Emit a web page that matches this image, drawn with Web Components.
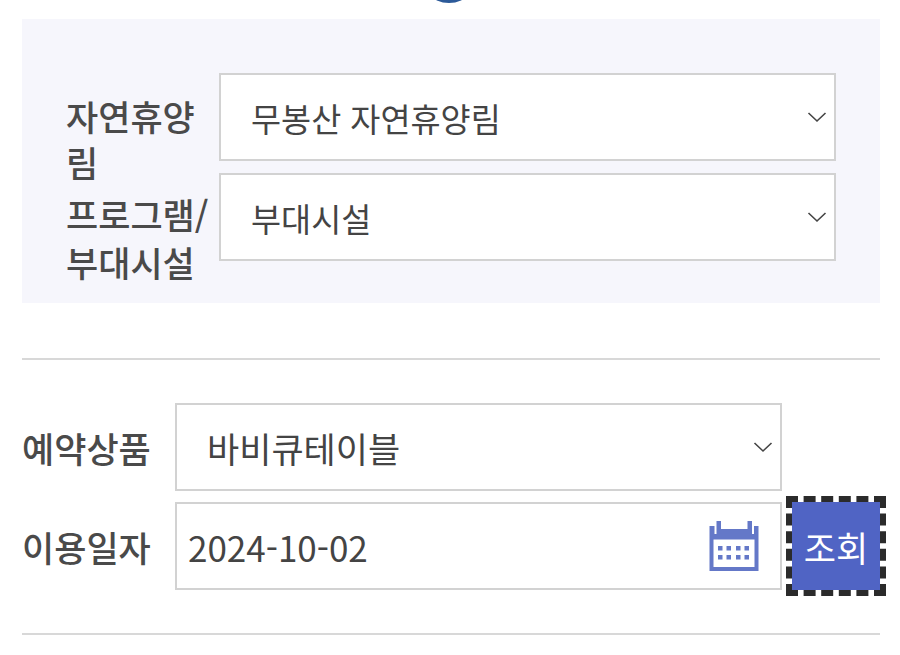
<!DOCTYPE html>
<html lang="ko"><head><meta charset="utf-8">
<style>
html,body{margin:0;padding:0;background:#fff;height:655px;overflow:hidden}
body{font-family:"Noto Sans CJK KR","Noto Sans",sans-serif;color:#444;position:relative}
</style></head><body>
<page-view></page-view>
<script>
const chevron=`<svg width="20" height="12" viewBox="0 0 20 12" fill="none"><path d="M1.5 2 L10 10 L18.5 2" stroke="#444" stroke-width="1.6"/></svg>`;
class PickBox extends HTMLElement{
  constructor(){super();this.attachShadow({mode:'open'}).innerHTML=`<style>
  :host{display:flex;align-items:center;box-sizing:border-box;height:88px;background:#fff;border:2px solid #d2d2d2;font-size:var(--fs,35px);color:#444;padding-left:var(--pl,30px);padding-right:7px;flex:1;min-width:0}
  .t{flex:1;white-space:nowrap;line-height:47px}
  .i{display:flex}
  </style><span class="t"><slot></slot></span><span class="i"><slot name="icon">${chevron}</slot></span>`;}
}
class FieldLabel extends HTMLElement{
  constructor(){super();this.attachShadow({mode:'open'}).innerHTML=`<style>
  :host{display:block;font-size:35px;font-weight:500;line-height:var(--lh,47.5px);color:#4a4a4a;flex:none;word-break:break-all}
  </style><slot></slot>`;}
}
class FormRow extends HTMLElement{
  constructor(){super();this.attachShadow({mode:'open'}).innerHTML=`<style>
  :host{display:flex;align-items:flex-start;height:var(--h,100px)}
  </style><slot></slot>`;}
}
class SearchBtn extends HTMLElement{
  constructor(){super();this.attachShadow({mode:'open'}).innerHTML=`<style>
  :host{display:flex;align-items:center;justify-content:center;box-sizing:border-box;width:88px;height:88px;background:#5064c4;color:#fff;font-size:35px;flex:none;margin-left:10px;outline:6px dashed #2b2b2b;outline-offset:0}
  </style><slot></slot>`;}
}
class PageView extends HTMLElement{
  constructor(){super();this.attachShadow({mode:'open'}).innerHTML=`<style>
  :host{display:block;padding:19px 20px 0 22px;width:858px;position:relative}
  .dot{position:absolute;left:433px;top:-12px;width:32px;height:15px;border-radius:50%;background:#2c5a99}
  .panel{background:#f6f6fc;padding:54px 44px 30px;height:284px;box-sizing:border-box;--fs:32.7px}
  .a{width:153px}
  .l1{margin-top:20px;--lh:46px}.l2{margin-top:17px}
  hr{border:0;height:2px;background:#d8d8d8;margin:0}
  .h1{margin-top:55px}
  .sec{padding-top:43px}
  .b{width:153px}
  .sec form-row:nth-child(1){--h:99px}
  .sec form-row:nth-child(2){--h:131px}
  .c{margin-right:98px}
  svg.cal{display:block}
  .date{--pl:11px;padding-right:21px}
  </style>
  <div class="dot"></div>
  <div class="panel">
    <form-row><field-label class="a l1">자연휴양림</field-label><pick-box>무봉산 자연휴양림</pick-box></form-row>
    <form-row><field-label class="a l2">프로그램/<br>부대시설</field-label><pick-box>부대시설</pick-box></form-row>
  </div>
  <hr class="h1">
  <div class="sec">
    <form-row><field-label class="b" style="margin-top:21px">예약상품</field-label><pick-box class="c">바비큐테이블</pick-box></form-row>
    <form-row><field-label class="b" style="margin-top:21px">이용일자</field-label><pick-box class="date">2024-10-02<svg class="cal" slot="icon" width="50" height="50" viewBox="0 0 50 50"><path fill="#6478c8" fill-rule="evenodd" d="M.5 5H5.5V13H7.5V0H12V8H38.5V0H43V13H45V5H49.5V50H.5ZM4.5 18.5V46H45.5V18.5Z"/><g fill="#6478c8"><rect x="9" y="25" width="4.5" height="4.5"/><rect x="17.5" y="25" width="4.5" height="4.5"/><rect x="27" y="25" width="4.5" height="4.5"/><rect x="35.5" y="25" width="4.5" height="4.5"/><rect x="9" y="34" width="4.5" height="4.5"/><rect x="17.5" y="34" width="4.5" height="4.5"/><rect x="27" y="34" width="4.5" height="4.5"/><rect x="35.5" y="34" width="4.5" height="4.5"/></g></svg></pick-box><search-btn>조회</search-btn></form-row>
  </div>
  <hr>`;}
}
customElements.define('pick-box',PickBox);
customElements.define('field-label',FieldLabel);
customElements.define('form-row',FormRow);
customElements.define('search-btn',SearchBtn);
customElements.define('page-view',PageView);
</script></body></html>
